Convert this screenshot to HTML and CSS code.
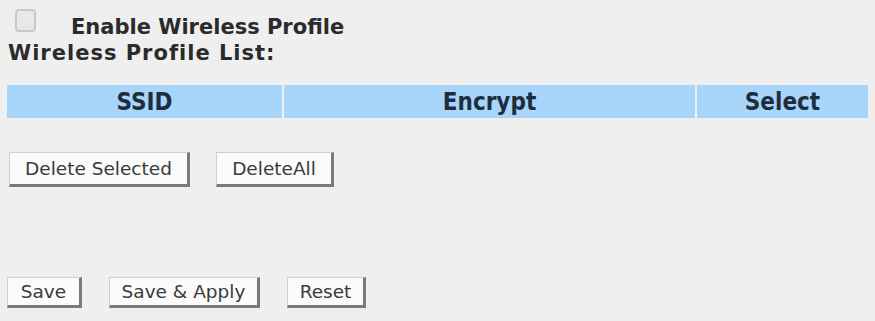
FILE: index.html
```html
<!DOCTYPE html>
<html>
<head>
<meta charset="utf-8">
<link rel="stylesheet" href="styles.css">
</head>
<body>
<div class="page">
  <div class="enable-row">
    <span class="checkbox"></span>
    <span class="enable-label">Enable Wireless Profile</span>
  </div>
  <div class="list-title">Wireless Profile List:</div>
  <div class="table-head">
    <div class="col col-ssid">SSID</div>
    <div class="col col-encrypt">Encrypt</div>
    <div class="col col-select">Select</div>
  </div>
  <div class="btn-row delete-row">
    <button class="btn btn-delsel">Delete Selected</button>
    <button class="btn btn-delall">DeleteAll</button>
  </div>
  <div class="btn-row save-row">
    <button class="btn btn-save">Save</button>
    <button class="btn btn-apply">Save &amp; Apply</button>
    <button class="btn btn-reset">Reset</button>
  </div>
</div>
</body>
</html>
```
FILE: styles.css
```css
html, body {
  margin: 0;
  padding: 0;
  background: #efefef;
}
.page {
  width: 875px;
  height: 321px;
  padding: 9px 7px 0 7px;
  box-sizing: border-box;
  font-family: "DejaVu Sans", Verdana, sans-serif;
  color: #2a2a2a;
}
.enable-row {
  display: flex;
  align-items: flex-start;
  padding-left: 8px;
}
.checkbox {
  width: 21px;
  height: 23px;
  box-sizing: border-box;
  border: 2px solid #c8c8c8;
  border-radius: 4px;
  background: #e8e8e8;
}
.enable-label {
  margin-left: 35px;
  margin-top: 5px;
  font-weight: bold;
  font-size: 21px;
  line-height: 26px;
  color: #2b2b2b;
}
.list-title {
  padding-left: 1px;
  font-weight: bold;
  font-size: 21px;
  line-height: 26px;
  letter-spacing: 1px;
  color: #2b2b2b;
}
.table-head {
  display: flex;
  gap: 2px;
  margin-top: 19px;
  height: 33px;
}
.col {
  background: #a8d5fa;
  display: flex;
  align-items: center;
  justify-content: center;
  font-family: "DejaVu Sans Condensed", "DejaVu Sans", sans-serif;
  font-weight: bold;
  font-size: 24px;
  color: #1d2f3f;
}
.col-ssid { width: 275px; }
.col-encrypt { width: 411px; }
.col-select { flex: 1; }
.btn-row {
  display: flex;
}
.delete-row {
  margin-top: 34px;
  gap: 26px;
}
.save-row {
  margin-top: 90px;
  gap: 27px;
}
.btn {
  font-family: "DejaVu Sans", Verdana, sans-serif;
  font-size: 18.5px;
  color: #3a3a3a;
  background: #fbfbfb;
  border: 1px solid #cfcfcf;
  border-right: 3px solid #7a7a7a;
  border-bottom: 3px solid #7a7a7a;
  padding: 0;
  margin: 0;
  height: 35px;
  display: flex;
  align-items: center;
  justify-content: center;
}
.btn-delsel { width: 181px; margin-left: 2px; }
.btn-delall { width: 118px; }
.save-row .btn { height: 31px; }
.btn-save { width: 75px; }
.btn-apply { width: 151px; }
.btn-reset { width: 79px; }
```
